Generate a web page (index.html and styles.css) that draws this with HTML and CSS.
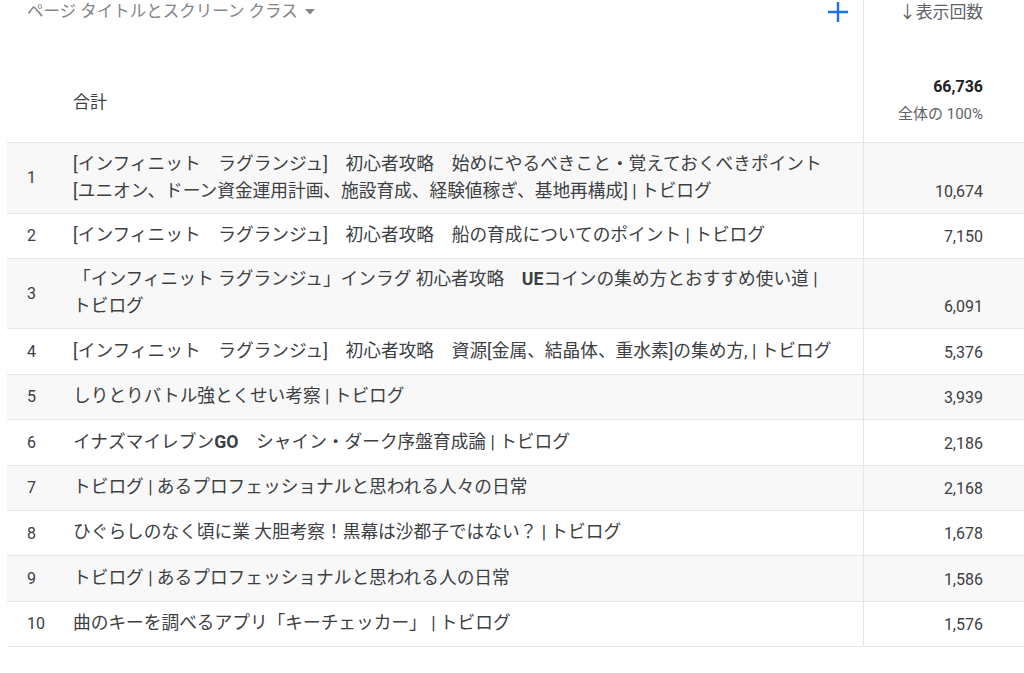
FILE: index.html
```html
<!DOCTYPE html>
<html lang="ja">
<head>
<meta charset="utf-8">
<title>ページ タイトルとスクリーン クラス</title>
<link rel="stylesheet" href="styles.css">
</head>
<body>
<div class="table">
  <div class="row head">
    <div class="head-title">
      <span class="dim">ページ タイトルとスクリーン クラス</span>
      <svg class="caret" width="10" height="6" viewBox="0 0 10 6"><path d="M0 0h10L5 5.5z" fill="#80868b"/></svg>
      <svg class="plus" width="22" height="22" viewBox="0 0 22 22"><path d="M11 1v20M1 11h20" stroke="#1a73e8" stroke-width="2.4" fill="none"/></svg>
    </div>
    <div class="cell val head-val">↓表示回数</div>
  </div>
  <div class="row total">
    <div class="cell num"></div>
    <div class="cell title">合計</div>
    <div class="cell val total-val">
      <div class="big">66,736</div>
      <div class="pct">全体の 100%</div>
    </div>
  </div>
  <div class="row data alt">
    <div class="cell num">1</div>
    <div class="cell title">[インフィニット　ラグランジュ]　初心者攻略　始めにやるべきこと・覚えておくべきポイント<br>[ユニオン、ドーン資金運用計画、施設育成、経験値稼ぎ、基地再構成] | トビログ</div>
    <div class="cell val">10,674</div>
  </div>
  <div class="row data">
    <div class="cell num">2</div>
    <div class="cell title">[インフィニット　ラグランジュ]　初心者攻略　船の育成についてのポイント | トビログ</div>
    <div class="cell val">7,150</div>
  </div>
  <div class="row data alt">
    <div class="cell num">3</div>
    <div class="cell title">「インフィニット ラグランジュ」インラグ 初心者攻略　<b>UE</b>コインの集め方とおすすめ使い道 |<br>トビログ</div>
    <div class="cell val">6,091</div>
  </div>
  <div class="row data">
    <div class="cell num">4</div>
    <div class="cell title">[インフィニット　ラグランジュ]　初心者攻略　資源[金属、結晶体、重水素]の集め方, | トビログ</div>
    <div class="cell val">5,376</div>
  </div>
  <div class="row data alt">
    <div class="cell num">5</div>
    <div class="cell title">しりとりバトル強とくせい考察 | トビログ</div>
    <div class="cell val">3,939</div>
  </div>
  <div class="row data">
    <div class="cell num">6</div>
    <div class="cell title">イナズマイレブン<b>GO</b>　シャイン・ダーク序盤育成論 | トビログ</div>
    <div class="cell val">2,186</div>
  </div>
  <div class="row data alt">
    <div class="cell num">7</div>
    <div class="cell title">トビログ | あるプロフェッショナルと思われる人々の日常</div>
    <div class="cell val">2,168</div>
  </div>
  <div class="row data">
    <div class="cell num">8</div>
    <div class="cell title">ひぐらしのなく頃に業 大胆考察！黒幕は沙都子ではない？ | トビログ</div>
    <div class="cell val">1,678</div>
  </div>
  <div class="row data alt">
    <div class="cell num">9</div>
    <div class="cell title">トビログ | あるプロフェッショナルと思われる人の日常</div>
    <div class="cell val">1,586</div>
  </div>
  <div class="row data">
    <div class="cell num">10</div>
    <div class="cell title">曲のキーを調べるアプリ「キーチェッカー」 | トビログ</div>
    <div class="cell val">1,576</div>
  </div>
</div>
</body>
</html>
```

FILE: styles.css
```css
html, body {
  margin: 0;
  padding: 0;
  background: #fff;
}
body {
  font-family: Roboto, "Noto Sans CJK JP", sans-serif;
  color: #3c4043;
}
.table {
  margin-left: 7px;
  width: 1017px;
}
.row {
  display: grid;
  grid-template-columns: 66px 790px 161px;
}
.cell {
  box-sizing: border-box;
}
.head {
  height: 62px;
}
.head-title {
  grid-column: 1 / 3;
  display: flex;
  align-items: flex-start;
  padding-left: 20px;
  padding-right: 14px;
  font-size: 16.5px;
  line-height: 24px;
}
.dim {
  color: #80868b;
}
.caret {
  margin-left: 7px;
  margin-top: 9px;
}
.plus {
  margin-left: auto;
  margin-top: 1px;
}
.val {
  border-left: 1px solid #e6e6e6;
  text-align: right;
  padding-right: 41px;
  font-size: 16px;
}
.head-val {
  font-size: 17px;
  line-height: 24px;
  color: #5f6368;
  letter-spacing: -0.2px;
}
.total {
  height: 81px;
  border-bottom: 1px solid #e6e6e6;
  box-sizing: border-box;
}
.total .title {
  font-size: 17px;
  align-self: center;
  padding-bottom: 4px;
}
.total-val {
  display: flex;
  flex-direction: column;
  justify-content: flex-end;
  padding-bottom: 13px;
}
.big {
  font-weight: 700;
  font-size: 16px;
  line-height: 26px;
  color: #202124;
}
.pct {
  font-size: 15px;
  line-height: 29px;
  color: #5f6368;
}
.data {
  box-sizing: border-box;
  min-height: 45.4px;
  border-bottom: 1px solid #e6e6e6;
}
.data.alt {
  background: #f8f8f8;
}
.data .num {
  padding-left: 20px;
  font-size: 16px;
  align-self: center;
}
.data .title {
  font-size: 17.7px;
  line-height: 27px;
  padding: 7.5px 0 8px;
  align-self: center;
  white-space: nowrap;
}
.data .title b {
  font-weight: 700;
}
.data .val {
  display: flex;
  align-items: flex-end;
  justify-content: flex-end;
  line-height: 27px;
  padding-bottom: 8px;
  padding-top: 7px;
}
```
